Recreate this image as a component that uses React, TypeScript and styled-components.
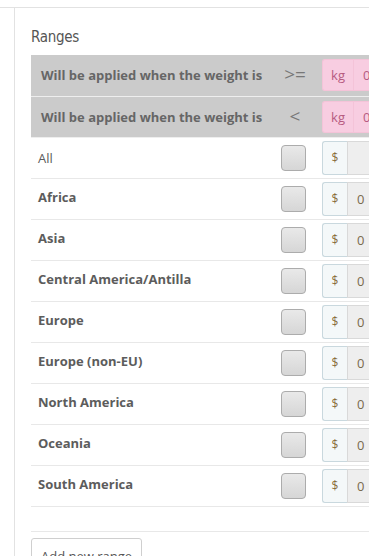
import React from 'react';
import styled, { createGlobalStyle } from 'styled-components';

const GlobalStyle = createGlobalStyle`
  html, body {
    margin: 0;
    padding: 0;
    overflow: hidden;
    background: #fff;
    font-family: "Open Sans", "DejaVu Sans", sans-serif;
    color: #555;
  }
`;

const Page = styled.div`
  margin-top: 7px;
  border-top: 1px solid #e2e2e2;
  height: 560px;
`;

const Panel = styled.div`
  margin-left: 14px;
  border-left: 1px solid #e2e2e2;
  padding: 19px 0 0 16px;
  height: 100%;
`;

const Heading = styled.h3`
  margin: 0 0 8px;
  font-family: "DejaVu Sans Condensed", "DejaVu Sans", sans-serif;
  font-weight: normal;
  font-size: 15px;
  line-height: 20px;
  color: #555;
  letter-spacing: -0.3px;
`;

const Table = styled.table`
  border-collapse: collapse;
  width: 420px;
  table-layout: fixed;
`;

const HeadRow = styled.tr`
  background: #cbcbcb;
  border-bottom: 1px solid #eeeeee;
`;

const ZoneRow = styled.tr`
  border-bottom: 1px solid #e8e8e8;
`;

const LabelCell = styled.td<{ $bold?: boolean; $head?: boolean }>`
  width: 244px;
  height: 41px;
  padding: 0 0 ${({ $bold, $head }) => ($bold && !$head ? '4px' : '0')} ${({ $head }) => ($head ? '10px' : '7px')};
  box-sizing: border-box;
  font-size: 13px;
  font-weight: ${({ $bold }) => ($bold ? 700 : 400)};
  color: ${({ $head }) => ($head ? '#666' : '#5c5c5c')};
  white-space: nowrap;
  vertical-align: middle;
`;

const MidCell = styled.td`
  width: 40px;
  padding: 0;
  text-align: center;
  vertical-align: middle;
`;

const InputCell = styled.td`
  padding: 0 0 0 7px;
  vertical-align: middle;
`;

const Operator = styled.span`
  font-size: 19px;
  color: #777;
  line-height: 1;
`;

const Checkbox = styled.span`
  display: inline-block;
  width: 23px;
  height: 24px;
  border: 1px solid #acacac;
  border-radius: 4px;
  background: linear-gradient(#e9e9e9, #d6d6d6);
  vertical-align: middle;
  margin-right: 4px;
`;

const Group = styled.div`
  display: flex;
  height: 34px;
`;

const Addon = styled.span<{ $pink?: boolean }>`
  display: flex;
  align-items: center;
  justify-content: center;
  width: ${({ $pink }) => ($pink ? '30px' : '24px')};
  border: 1px solid ${({ $pink }) => ($pink ? '#f4c3d8' : '#c9d8de')};
  border-right: none;
  border-radius: 3px 0 0 3px;
  background: ${({ $pink }) => ($pink ? '#f8cde1' : '#f4f8f9')};
  color: ${({ $pink }) => ($pink ? '#b65b80' : '#8a6d3b')};
  font-size: ${({ $pink }) => ($pink ? '13px' : '12px')};
`;

const Field = styled.span<{ $pink?: boolean }>`
  display: flex;
  align-items: center;
  width: 80px;
  padding-left: 9px;
  border: 1px solid ${({ $pink }) => ($pink ? '#f4c3d8' : '#d9d9d9')};
  background: ${({ $pink }) => ($pink ? '#f8cde1' : '#eeeeee')};
  color: ${({ $pink }) => ($pink ? '#b65b80' : '#7a6a4c')};
  font-size: 13px;
`;

const PinkGroup = styled(Group)`
  height: 32px;
`;

const Spacer = styled.tr`
  height: 25px;
  border-bottom: 1px solid #e8e8e8;
`;

const AddButton = styled.button`
  margin-top: 6px;
  padding: 8px 9px;
  font-family: "Open Sans", sans-serif;
  font-size: 13px;
  line-height: 18px;
  color: #555;
  background: #fff;
  border: 1px solid #cfcfcf;
  border-radius: 3px;
`;

const zones = [
  'Africa',
  'Asia',
  'Central America/Antilla',
  'Europe',
  'Europe (non-EU)',
  'North America',
  'Oceania',
  'South America',
];

export default function App() {
  return (
    <>
      <GlobalStyle />
      <Page>
        <Panel>
          <Heading>Ranges</Heading>
          <Table>
            <tbody>
              {['>=', '<'].map((op) => (
                <HeadRow key={op}>
                  <LabelCell $bold $head>Will be applied when the weight is</LabelCell>
                  <MidCell><Operator>{op}</Operator></MidCell>
                  <InputCell>
                    <PinkGroup>
                      <Addon $pink>kg</Addon>
                      <Field $pink>0</Field>
                    </PinkGroup>
                  </InputCell>
                </HeadRow>
              ))}
              <ZoneRow>
                <LabelCell>All</LabelCell>
                <MidCell><Checkbox /></MidCell>
                <InputCell>
                  <Group>
                    <Addon>$</Addon>
                    <Field />
                  </Group>
                </InputCell>
              </ZoneRow>
              {zones.map((z) => (
                <ZoneRow key={z}>
                  <LabelCell $bold>{z}</LabelCell>
                  <MidCell><Checkbox /></MidCell>
                  <InputCell>
                    <Group>
                      <Addon>$</Addon>
                      <Field>0</Field>
                    </Group>
                  </InputCell>
                </ZoneRow>
              ))}
              <Spacer><td colSpan={3} /></Spacer>
            </tbody>
          </Table>
          <AddButton>Add new range</AddButton>
        </Panel>
      </Page>
    </>
  );
}
